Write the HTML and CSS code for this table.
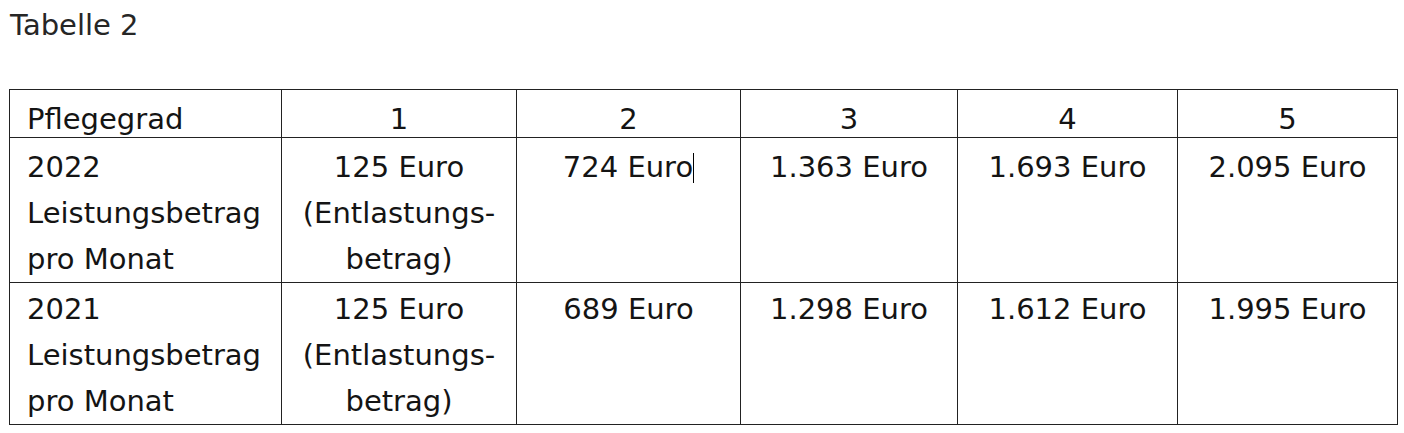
FILE: index.html
```html
<!DOCTYPE html>
<html lang="de">
<head>
<meta charset="utf-8">
<link rel="stylesheet" href="styles.css">
</head>
<body>
<div class="page">
  <p class="caption">Tabelle 2</p>
  <table class="grid">
    <colgroup>
      <col class="c0"><col class="c1"><col class="c2"><col class="c3"><col class="c4"><col class="c5">
    </colgroup>
    <tr class="head">
      <td class="label">Pflegegrad</td>
      <td>1</td><td>2</td><td>3</td><td>4</td><td>5</td>
    </tr>
    <tr class="body first">
      <td class="label">2022<br>Leistungsbetrag<br>pro Monat</td>
      <td>125 Euro<br>(Entlastungs-<br>betrag)</td>
      <td>724 Euro<span class="caret"></span></td>
      <td>1.363 Euro</td>
      <td>1.693 Euro</td>
      <td>2.095 Euro</td>
    </tr>
    <tr class="body second">
      <td class="label">2021<br>Leistungsbetrag<br>pro Monat</td>
      <td>125 Euro<br>(Entlastungs-<br>betrag)</td>
      <td>689 Euro</td>
      <td>1.298 Euro</td>
      <td>1.612 Euro</td>
      <td>1.995 Euro</td>
    </tr>
  </table>
</div>
</body>
</html>
```
FILE: styles.css
```css
html, body {
  margin: 0;
  background: #fff;
}
.page {
  padding: 0 0 0 9px;
  font-family: "DejaVu Sans", "Open Sans", sans-serif;
  color: #141414;
}
.caption {
  margin: 0;
  padding: 2px 0 0 1px;
  font-size: 29px;
  line-height: 46px;
  color: #262626;
}
.grid {
  margin-top: 41px;
  border-collapse: collapse;
  table-layout: fixed;
  width: 1388px;
  font-size: 29px;
  line-height: 46px;
}
.c0 { width: 272px; }
.c1 { width: 235px; }
.c2 { width: 224px; }
.c3 { width: 217px; }
.c4 { width: 220px; }
.c5 { width: 220px; }
.grid td {
  border: 1.5px solid #222;
  padding: 0;
  text-align: center;
  vertical-align: top;
}
.grid td.label {
  text-align: left;
  padding-left: 17px;
}
.head td {
  line-height: 36px;
  padding-top: 11px;
}
.first td {
  padding-top: 6px;
}
.second td {
  padding-top: 3px;
  padding-bottom: 0;
}
.caret {
  display: inline-block;
  width: 1px;
  height: 30px;
  background: #000;
  vertical-align: -6px;
}
```
